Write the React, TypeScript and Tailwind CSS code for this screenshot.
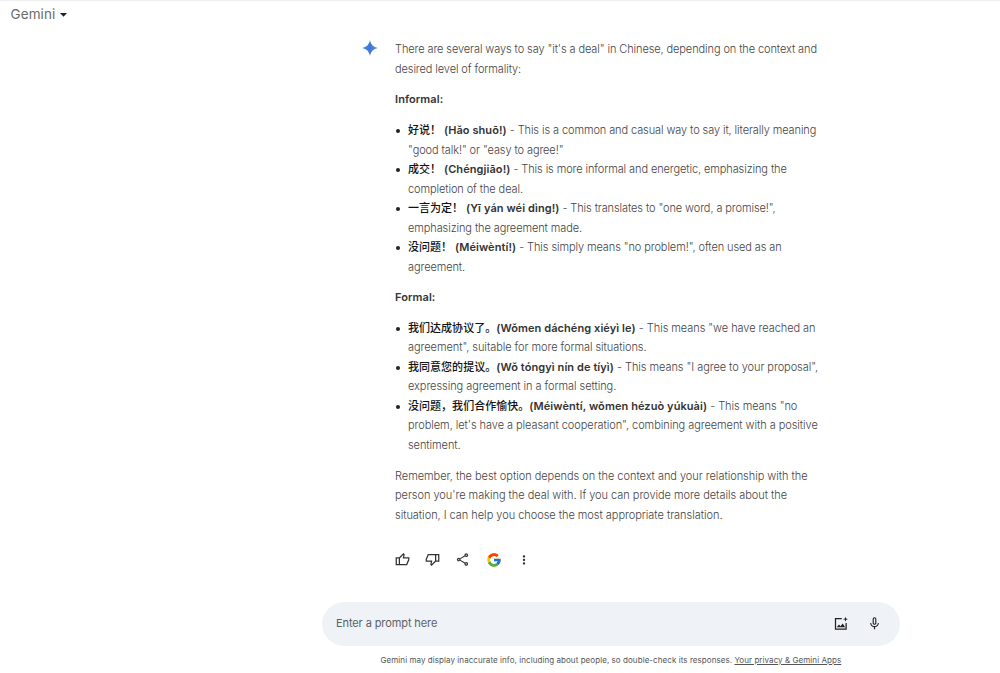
import React from 'react';
import { MdArrowDropDown, MdMoreVert, MdOutlineShare, MdMicNone } from 'react-icons/md';
import { FcGoogle } from 'react-icons/fc';

function Line({ children }: { children: React.ReactNode }) {
  return <div className="whitespace-pre">{children}</div>;
}

function B({ zh, children }: { zh?: string; children: React.ReactNode }) {
  return (
    <b className="font-semibold tracking-[0.08px] text-[#333]">
      {zh && <span className="font-medium tracking-[0.03px] text-[#111]">{zh}</span>}
      {children}
    </b>
  );
}

function Item({ lines }: { lines: React.ReactNode[] }) {
  return (
    <li className="flex">
      <span className="mt-[8px] mr-[8px] ml-[1px] size-[4px] shrink-0 rounded-full bg-[#222]" />
      <div>{lines.map((l, i) => <Line key={i}>{l}</Line>)}</div>
    </li>
  );
}

const informal: React.ReactNode[][] = [
  [<><B zh="好说！">{' (Hǎo shuō!)'}</B> - This is a common and casual way to say it, literally meaning</>, '"good talk!" or "easy to agree!"'],
  [<><B zh="成交！">{' (Chéngjiāo!)'}</B> - This is more informal and energetic, emphasizing the</>, 'completion of the deal.'],
  [<><B zh="一言为定！">{' (Yī yán wéi dìng!)'}</B> - This translates to "one word, a promise!",</>, 'emphasizing the agreement made.'],
  [<><B zh="没问题！">{' (Méiwèntí!)'}</B> - This simply means "no problem!", often used as an</>, 'agreement.'],
];

const formal: React.ReactNode[][] = [
  [<><B zh="我们达成协议了。">(Wǒmen dáchéng xiéyì le)</B> - This means "we have reached an</>, 'agreement", suitable for more formal situations.'],
  [<><B zh="我同意您的提议。">(Wǒ tóngyì nín de tíyì)</B> - This means "I agree to your proposal",</>, 'expressing agreement in a formal setting.'],
  [<><B zh="没问题，我们合作愉快。">(Méiwèntí, wǒmen hézuò yúkuài)</B> - This means "no</>, `problem, let's have a pleasant cooperation", combining agreement with a positive`, 'sentiment.'],
];

function Thumb({ className = '' }: { className?: string }) {
  return (
    <svg viewBox="0 0 24 24" className={`size-[15px] ${className}`} fill="none" stroke="#333" strokeWidth="2">
      <path d="M2 9.500h5V20H2zM7 9.500l6.500-6.500 1 1-1 5.500H22v3L18.700 20H7" />
    </svg>
  );
}

export default function App() {
  return (
    <div className="flex h-[673px] flex-col overflow-hidden border-t border-[#eeeeee] bg-white font-['Inter','Noto_Sans_CJK_SC',sans-serif] text-[#444]">
      <header className="flex h-[26px] shrink-0 items-center pl-[10.5px] text-[13.5px] tracking-[0.1px] text-[#6a6a6a]">
        Gemini
        <MdArrowDropDown className="size-[17px] text-[#222]" />
      </header>
      <main className="ml-[362px] flex h-[575px] shrink-0 pt-[13px]">
        <svg viewBox="0 0 24 24" className="mr-[17px] size-[16px] shrink-0">
          <defs>
            <linearGradient id="spark" x1="0" y1="0" x2="1" y2="0">
              <stop offset="0" stopColor="#4b86e8" />
              <stop offset="0.5" stopColor="#3c78d8" />
              <stop offset="1" stopColor="#6f86d8" />
            </linearGradient>
          </defs>
          <path fill="url(#spark)" d="M12 0C13.300 7 17 10.700 24 12C17 13.300 13.300 17 12 24C10.700 17 7 13.300 0 12C7 10.700 10.700 7 12 0Z" />
        </svg>
        <div className="flex flex-col gap-[11.2px] pt-[0.2px] text-[11px] leading-[19.5px] font-light tracking-[-0.1px]">
          <div>
            <Line>There are several ways to say "it's a deal" in Chinese, depending on the context and</Line>
            <Line>desired level of formality:</Line>
          </div>
          <Line><B>Informal:</B></Line>
          <ul>{informal.map((l, i) => <Item key={i} lines={l} />)}</ul>
          <Line><B>Formal:</B></Line>
          <ul className="tracking-[-0.06px]">{formal.map((l, i) => <Item key={i} lines={l} />)}</ul>
          <div className="tracking-[-0.035px]">
            <Line>Remember, the best option depends on the context and your relationship with the</Line>
            <Line>person you're making the deal with. If you can provide more details about the</Line>
            <Line>situation, I can help you choose the most appropriate translation.</Line>
          </div>
          <div className="mt-[15.5px] flex items-center gap-[15.2px] text-[#333]">
            <Thumb />
            <Thumb className="rotate-180" />
            <MdOutlineShare className="size-[15px]" />
            <FcGoogle className="size-[16px]" />
            <MdMoreVert className="size-[14px]" />
          </div>
        </div>
      </main>
      <div className="ml-[321.5px] flex h-[44px] w-[578px] shrink-0 items-center rounded-full bg-[#eff3f7] pr-[17.5px] pb-[2px] pl-[14.5px] text-[11px] text-[#5c6064]">
        <span className="flex-1 tracking-[-0.1px]">Enter a prompt here</span>
        <svg viewBox="0 0 24 24" className="mr-[19px] size-[15px]" fill="none" stroke="#222" strokeWidth="2">
          <path d="M14 4H4v17h17V11" />
          <path fill="#222" stroke="none" d="M6 18l3.500-4.500 2.500 3 3.500-4.500L19.500 18zM20 1l1 3 3 1-3 1-1 3-1-3-3-1 3-1z" />
        </svg>
        <MdMicNone className="size-[15px] text-[#222]" />
      </div>
      <footer className="mt-[9px] ml-[380.5px] text-[8px] leading-[10px] tracking-[0.065px] whitespace-pre text-[#555]">
        Gemini may display inaccurate info, including about people, so double-check its responses. <span className="underline">Your privacy & Gemini Apps</span>
      </footer>
    </div>
  );
}
